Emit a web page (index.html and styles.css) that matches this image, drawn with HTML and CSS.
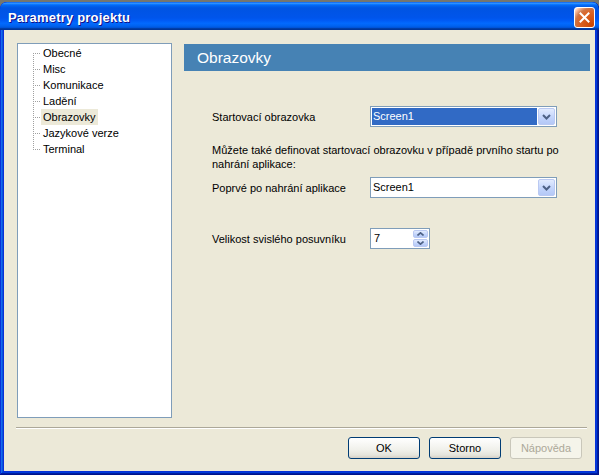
FILE: index.html
```html
<!DOCTYPE html>
<html lang="cs">

<head>
    <meta charset="UTF-8">
    <title>Parametry projektu</title>
    <link rel="stylesheet" href="styles.css">
</head>

<body>
    <div class="window">
        <!-- titulek okna -->
        <div class="titlebar">
            <span class="title">Parametry projektu</span>
            <span class="close">
                <svg width="11" height="11" viewBox="0 0 11 11">
                    <path d="M1.5 1.5 L9.5 9.5 M9.5 1.5 L1.5 9.5" stroke="#fff" stroke-width="2" stroke-linecap="square" />
                </svg>
            </span>
        </div>

        <div class="client">
            <div class="main">
                <!-- strom stránek -->
                <ul class="tree">
                    <li><span>Obecné</span></li>
                    <li><span>Misc</span></li>
                    <li><span>Komunikace</span></li>
                    <li><span>Ladění</span></li>
                    <li class="selected"><span>Obrazovky</span></li>
                    <li><span>Jazykové verze</span></li>
                    <li><span>Terminal</span></li>
                </ul>

                <div class="page">
                    <div class="page-head">Obrazovky</div>

                    <div class="form">
                        <div class="row">
                            <label>Startovací obrazovka</label>
                            <div class="combo active">
                                <span class="value">Screen1</span>
                                <span class="drop">
                                    <svg width="9" height="6" viewBox="0 0 9 6"><path d="M1 1 L4.5 4.5 L8 1" fill="none" stroke="#4d6185" stroke-width="2" /></svg>
                                </span>
                            </div>
                        </div>

                        <p class="note">Můžete také definovat startovací obrazovku v případě prvního startu po<br>nahrání aplikace:</p>

                        <div class="row">
                            <label>Poprvé po nahrání aplikace</label>
                            <div class="combo">
                                <span class="value">Screen1</span>
                                <span class="drop">
                                    <svg width="9" height="6" viewBox="0 0 9 6"><path d="M1 1 L4.5 4.5 L8 1" fill="none" stroke="#4d6185" stroke-width="2" /></svg>
                                </span>
                            </div>
                        </div>

                        <div class="row row-spin">
                            <label>Velikost svislého posuvníku</label>
                            <div class="spin">
                                <span class="value">7</span>
                                <span class="arrows">
                                    <span><svg width="7" height="4" viewBox="0 0 7 4"><path d="M0.5 3.5 L3.5 0.8 L6.5 3.5" fill="none" stroke="#4d6185" stroke-width="1.6" /></svg></span>
                                    <span><svg width="7" height="4" viewBox="0 0 7 4"><path d="M0.5 0.5 L3.5 3.2 L6.5 0.5" fill="none" stroke="#4d6185" stroke-width="1.6" /></svg></span>
                                </span>
                            </div>
                        </div>
                    </div>
                </div>
            </div>

            <div class="sep"></div>

            <div class="buttons">
                <button class="btn">OK</button>
                <button class="btn">Storno</button>
                <button class="btn" disabled>Nápověda</button>
            </div>
        </div>
    </div>
</body>

</html>
```

FILE: styles.css
```css
body {
    margin: 0;
    background: #75766f;
    font-family: "Liberation Sans", Arial, sans-serif;
    font-size: 11px;
    color: #000;
}

.window {
    width: 599px;
    height: 473px;
    margin-top: 2px;
    display: flex;
    flex-direction: column;
    background: #0831d9;
    border-radius: 7px 7px 0 0;
    overflow: hidden;
    box-shadow: inset -1px -1px #00138c, inset 1px 1px #0831d9,
        inset -2px -2px #001ea0, inset 2px 2px #166aee,
        inset -3px -3px #003bda, inset 3px 3px #0855dd;
}

/* titulek */
.titlebar {
    height: 28px;
    flex: none;
    display: flex;
    align-items: center;
    justify-content: space-between;
    padding: 0 4px 0 8px;
    background: linear-gradient(to bottom, #0058ee 0%, #3593ff 4%, #288eff 6%, #127dff 8%,
            #036ffc 10%, #0262ee 14%, #0057e5 20%, #0054e3 24%, #0055eb 56%, #005bf5 66%,
            #026afe 76%, #0062ef 86%, #0052d6 92%, #0040ab 94%, #003092 100%);
    border-radius: 7px 7px 0 0;
}

.title {
    color: #fff;
    font-weight: bold;
    font-size: 13px;
    letter-spacing: 0.2px;
    text-shadow: 1px 1px #0f1089;
    margin-top: 2px;
}

.close {
    width: 21px;
    height: 21px;
    box-sizing: border-box;
    margin-top: 3px;
    display: flex;
    align-items: center;
    justify-content: center;
    border: 1px solid #fff;
    border-radius: 3px;
    background: radial-gradient(circle at 90% 90%, #cc4600 0%, #dc6527 55%, #cd7546 70%, #ffccb2 90%, #fff 100%);
}

/* klientská oblast */
.client {
    flex: 1;
    margin: 0 4px 4px;
    background: #ece9d8;
    display: flex;
    flex-direction: column;
}

.main {
    display: flex;
    gap: 12px;
    padding: 13px 5px 0 13px;
    height: 375px;
}

.tree {
    width: 155px;
    box-sizing: border-box;
    margin: 0;
    padding: 1px 0 0;
    list-style: none;
    background: #fff;
    border: 1px solid #7f9db9;
}

.tree li {
    position: relative;
    height: 16px;
    line-height: 16px;
    padding-left: 23px;
}

.tree li span {
    display: inline-block;
    padding: 0 2px;
}

.tree li.selected span {
    background: #ece9d8;
}

/* tečkované čáry stromu */
.tree li::before {
    content: "";
    position: absolute;
    left: 15px;
    top: 8px;
    width: 8px;
    height: 1px;
    background: repeating-linear-gradient(to right, #a0a0a0 0 1px, transparent 1px 2px);
}

.tree li::after {
    content: "";
    position: absolute;
    left: 15px;
    top: 0;
    width: 1px;
    height: 16px;
    background: repeating-linear-gradient(to bottom, #a0a0a0 0 1px, transparent 1px 2px);
}

.tree li:first-child::after {
    top: 8px;
    height: 8px;
}

.tree li:last-child::after {
    height: 9px;
}

/* pravá stránka */
.page {
    flex: 1;
    padding-top: 1px;
}

.page-head {
    height: 27px;
    line-height: 27px;
    padding-left: 13px;
    background: #4682b4;
    color: #fff;
    font-size: 15.5px;
}

.form {
    padding: 35px 0 0 28px;
}

.row {
    display: flex;
    align-items: center;
}

.row label {
    width: 158px;
}

.row-spin {
    margin-top: 30px;
}

.note {
    margin: 16px 0 6px;
    line-height: 14px;
}

.combo {
    width: 187px;
    height: 21px;
    box-sizing: border-box;
    border: 1px solid #7f9db9;
    background: #fff;
    display: flex;
    align-items: center;
    padding: 1px;
}

.combo .value {
    flex: 1;
    height: 100%;
    line-height: 17px;
    padding-left: 1px;
}

.combo.active .value {
    background: #316ac5;
    color: #fff;
}

.combo .drop {
    width: 17px;
    height: 17px;
    box-sizing: border-box;
    margin-left: 1px;
    display: flex;
    align-items: center;
    justify-content: center;
    border: 1px solid #bac9f2;
    border-radius: 2px;
    background: linear-gradient(to bottom, #e2ebfe, #c1d3fb 60%, #b4c8f6);
}

.spin {
    width: 60px;
    height: 21px;
    box-sizing: border-box;
    border: 1px solid #7f9db9;
    background: #fff;
    display: flex;
    padding: 1px;
}

.spin .value {
    flex: 1;
    line-height: 17px;
    padding-left: 2px;
}

.spin .arrows {
    width: 15px;
    display: flex;
    flex-direction: column;
    gap: 1px;
}

.spin .arrows span {
    flex: 1;
    display: flex;
    align-items: center;
    justify-content: center;
    border: 1px solid #bac9f2;
    border-radius: 2px;
    background: linear-gradient(to bottom, #e2ebfe, #c1d3fb 60%, #b4c8f6);
}

.sep {
    margin: 9px 8px 0 12px;
    height: 1px;
    border-top: 1px solid #aca899;
    background: #fff;
}

.buttons {
    display: flex;
    justify-content: flex-end;
    gap: 9px;
    padding: 8px 13px 0 0;
}

.btn {
    width: 72px;
    height: 22px;
    padding: 0;
    border: 1px solid #003c74;
    border-radius: 3px;
    background: linear-gradient(to bottom, #fff, #f0f0ea 60%, #e5e4dc 85%, #d6d0c5);
    font-family: "Liberation Sans", Arial, sans-serif;
    font-size: 11px;
    color: #000;
}

.btn:disabled {
    border-color: #c9c7ba;
    background: #f5f4ea;
    color: #aca899;
}
```
